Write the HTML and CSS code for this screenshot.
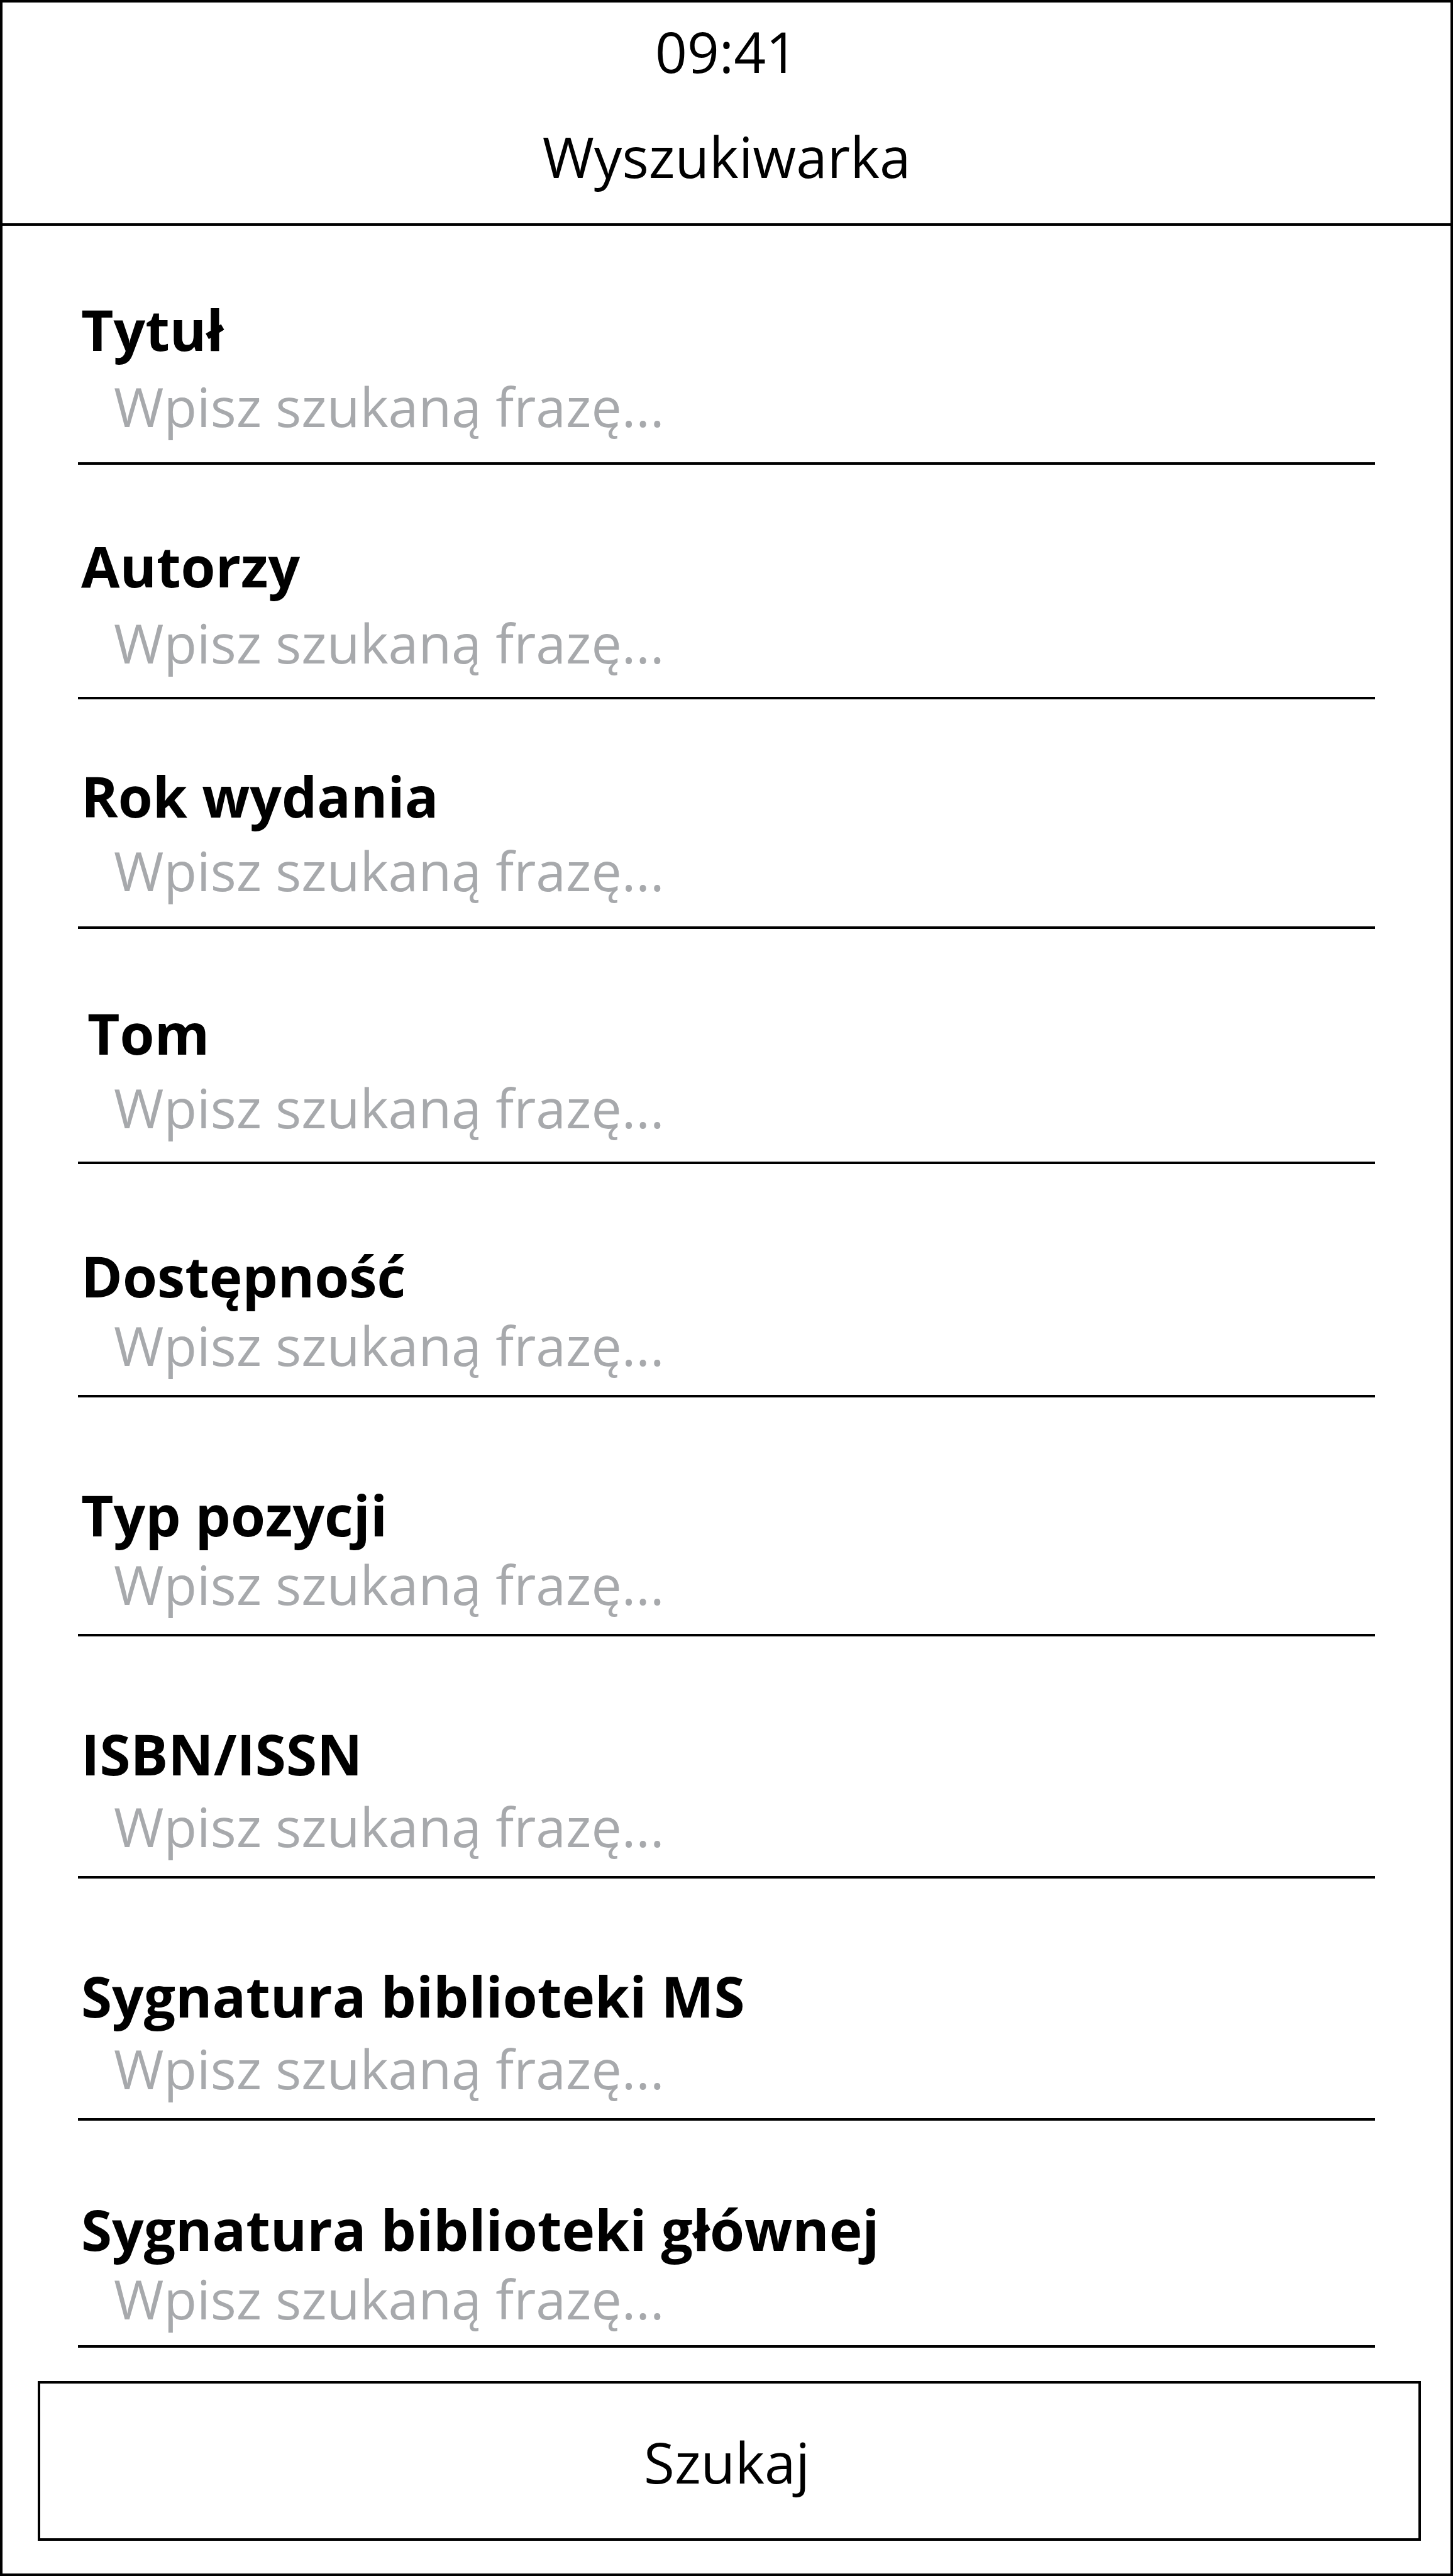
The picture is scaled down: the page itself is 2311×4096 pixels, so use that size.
FILE: index.html
```html
<!DOCTYPE html>
<html lang="pl">
<head>
<meta charset="utf-8">
<meta name="viewport" content="width=device-width, initial-scale=1">
<title>Wyszukiwarka</title>
<link rel="stylesheet" href="styles.css">
</head>
<body>
<div class="screen">
  <header class="header">
    <time class="clock">09:41</time>
    <h1 class="title">Wyszukiwarka</h1>
  </header>
  <form class="search">
    <div class="fields">
      <div class="field label-far line-far">
        <label class="label" for="title">Tytuł</label>
        <input class="input" id="title" type="text" placeholder="Wpisz szukaną frazę...">
      </div>
      <div class="field after-116 label-far line-mid">
        <label class="label" for="authors">Autorzy</label>
        <input class="input" id="authors" type="text" placeholder="Wpisz szukaną frazę...">
      </div>
      <div class="field after-109 label-mid line-far">
        <label class="label" for="year">Rok wydania</label>
        <input class="input" id="year" type="text" placeholder="Wpisz szukaną frazę...">
      </div>
      <div class="field after-121 label-mid line-mid">
        <label class="label label-indent" for="volume">Tom</label>
        <input class="input" id="volume" type="text" placeholder="Wpisz szukaną frazę...">
      </div>
      <div class="field after-133 label-near line-near">
        <label class="label" for="availability">Dostępność</label>
        <input class="input" id="availability" type="text" placeholder="Wpisz szukaną frazę...">
      </div>
      <div class="field after-142 label-near line-near">
        <label class="label" for="type">Typ pozycji</label>
        <input class="input" id="type" type="text" placeholder="Wpisz szukaną frazę...">
      </div>
      <div class="field after-142 label-close line-near">
        <label class="label" for="isbn">ISBN/ISSN</label>
        <input class="input" id="isbn" type="text" placeholder="Wpisz szukaną frazę...">
      </div>
      <div class="field after-142 label-close line-near">
        <label class="label" for="ms">Sygnatura biblioteki MS</label>
        <input class="input" id="ms" type="text" placeholder="Wpisz szukaną frazę...">
      </div>
      <div class="field after-128 label-near line-tight">
        <label class="label" for="main">Sygnatura biblioteki głównej</label>
        <input class="input" id="main" type="text" placeholder="Wpisz szukaną frazę...">
      </div>
    </div>
    <button class="submit" type="submit">Szukaj</button>
  </form>
</div>
</body>
</html>
```
FILE: styles.css
```css
* {
  box-sizing: border-box;
}

body {
  margin: 0;
  background: #fff;
  color: #000;
  font-family: "Open Sans", "Noto Sans", sans-serif;
}

.screen {
  display: flex;
  flex-direction: column;
  min-height: 100vh;
  border: 4px solid #000;
}

.header {
  display: flex;
  flex-direction: column;
  align-items: center;
  gap: 67px;
  padding: 28px 0 56px;
  border-bottom: 4px solid #000;
}

.clock,
.title {
  margin: 0;
  font-size: 89px;
  font-weight: 400;
  line-height: 100px;
}

.search {
  display: flex;
  flex: 1;
  flex-direction: column;
  padding: 120px 47px 52px 56px;
}

.fields {
  display: flex;
  flex-direction: column;
  padding: 0 73px 0 64px;
}

.field {
  display: flex;
  flex-direction: column;
  border-bottom: 4px solid #000;
}

/* Space above a field */
.after-109 { margin-top: 109px; }
.after-116 { margin-top: 116px; }
.after-121 { margin-top: 121px; }
.after-128 { margin-top: 128px; }
.after-133 { margin-top: 133px; }
.after-142 { margin-top: 142px; }

/* Space between the label and the text box */
.label-far { gap: 17px; }
.label-mid { gap: 13px; }
.label-close { gap: 10px; }
.label-near { gap: 5px; }

/* Space between the text box and the rule under it */
.line-far { padding-bottom: 29px; }
.line-mid { padding-bottom: 26px; }
.line-near { padding-bottom: 19px; }
.line-tight { padding-bottom: 14px; }

.label {
  padding-left: 5px;
  font-size: 89px;
  font-weight: 700;
  line-height: 90px;
}

.label-indent {
  padding-left: 15px;
}

.input {
  width: 100%;
  height: 120px;
  padding: 0 0 0 57px;
  border: 0;
  outline: 0;
  background: none;
  color: #000;
  font: 400 86px/120px "Open Sans", "Noto Sans", sans-serif;
}

.input::placeholder {
  color: #a7a9ac;
  opacity: 1;
}

.submit {
  flex: 1;
  min-height: 254px;
  margin-top: 53px;
  padding: 4px 8px 0 0;
  border: 4px solid #000;
  background: #fff;
  color: #000;
  font: 400 89px/100px "Open Sans", "Noto Sans", sans-serif;
}
```
